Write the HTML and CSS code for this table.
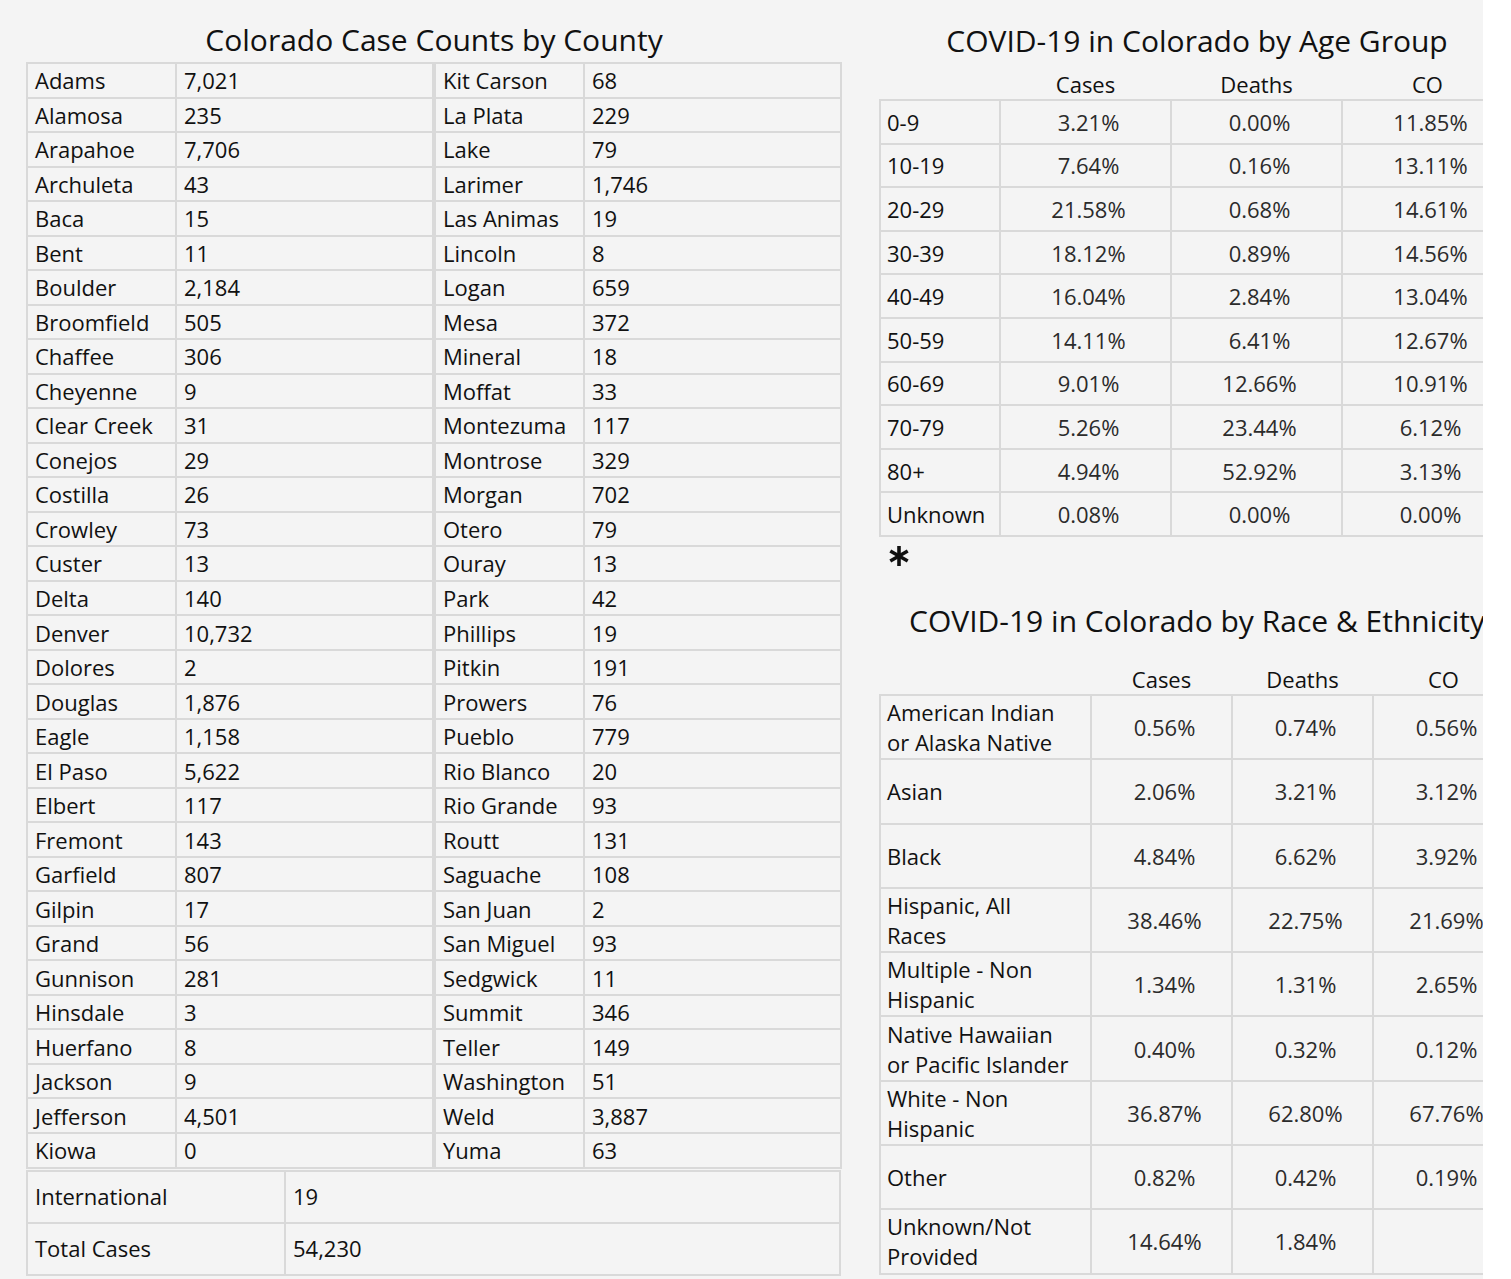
FILE: index.html
```html
<!DOCTYPE html>
<html lang="en">
<head>
<meta charset="utf-8">
<title>Colorado COVID-19 Data</title>
<link rel="stylesheet" href="styles.css">
</head>
<body>
<div class="page">
  <section class="left">
    <h2 class="title">Colorado Case Counts by County</h2>
    <div class="county-wrap">
      <table class="county">
        <colgroup><col class="c-name"><col class="c-val"></colgroup>
        <tbody>
          <tr><td>Adams</td><td>7,021</td></tr>
          <tr><td>Alamosa</td><td>235</td></tr>
          <tr><td>Arapahoe</td><td>7,706</td></tr>
          <tr><td>Archuleta</td><td>43</td></tr>
          <tr><td>Baca</td><td>15</td></tr>
          <tr><td>Bent</td><td>11</td></tr>
          <tr><td>Boulder</td><td>2,184</td></tr>
          <tr><td>Broomfield</td><td>505</td></tr>
          <tr><td>Chaffee</td><td>306</td></tr>
          <tr><td>Cheyenne</td><td>9</td></tr>
          <tr><td>Clear Creek</td><td>31</td></tr>
          <tr><td>Conejos</td><td>29</td></tr>
          <tr><td>Costilla</td><td>26</td></tr>
          <tr><td>Crowley</td><td>73</td></tr>
          <tr><td>Custer</td><td>13</td></tr>
          <tr><td>Delta</td><td>140</td></tr>
          <tr><td>Denver</td><td>10,732</td></tr>
          <tr><td>Dolores</td><td>2</td></tr>
          <tr><td>Douglas</td><td>1,876</td></tr>
          <tr><td>Eagle</td><td>1,158</td></tr>
          <tr><td>El Paso</td><td>5,622</td></tr>
          <tr><td>Elbert</td><td>117</td></tr>
          <tr><td>Fremont</td><td>143</td></tr>
          <tr><td>Garfield</td><td>807</td></tr>
          <tr><td>Gilpin</td><td>17</td></tr>
          <tr><td>Grand</td><td>56</td></tr>
          <tr><td>Gunnison</td><td>281</td></tr>
          <tr><td>Hinsdale</td><td>3</td></tr>
          <tr><td>Huerfano</td><td>8</td></tr>
          <tr><td>Jackson</td><td>9</td></tr>
          <tr><td>Jefferson</td><td>4,501</td></tr>
          <tr><td>Kiowa</td><td>0</td></tr>
        </tbody>
      </table>
      <table class="county">
        <colgroup><col class="c-name"><col class="c-val"></colgroup>
        <tbody>
          <tr><td>Kit Carson</td><td>68</td></tr>
          <tr><td>La Plata</td><td>229</td></tr>
          <tr><td>Lake</td><td>79</td></tr>
          <tr><td>Larimer</td><td>1,746</td></tr>
          <tr><td>Las Animas</td><td>19</td></tr>
          <tr><td>Lincoln</td><td>8</td></tr>
          <tr><td>Logan</td><td>659</td></tr>
          <tr><td>Mesa</td><td>372</td></tr>
          <tr><td>Mineral</td><td>18</td></tr>
          <tr><td>Moffat</td><td>33</td></tr>
          <tr><td>Montezuma</td><td>117</td></tr>
          <tr><td>Montrose</td><td>329</td></tr>
          <tr><td>Morgan</td><td>702</td></tr>
          <tr><td>Otero</td><td>79</td></tr>
          <tr><td>Ouray</td><td>13</td></tr>
          <tr><td>Park</td><td>42</td></tr>
          <tr><td>Phillips</td><td>19</td></tr>
          <tr><td>Pitkin</td><td>191</td></tr>
          <tr><td>Prowers</td><td>76</td></tr>
          <tr><td>Pueblo</td><td>779</td></tr>
          <tr><td>Rio Blanco</td><td>20</td></tr>
          <tr><td>Rio Grande</td><td>93</td></tr>
          <tr><td>Routt</td><td>131</td></tr>
          <tr><td>Saguache</td><td>108</td></tr>
          <tr><td>San Juan</td><td>2</td></tr>
          <tr><td>San Miguel</td><td>93</td></tr>
          <tr><td>Sedgwick</td><td>11</td></tr>
          <tr><td>Summit</td><td>346</td></tr>
          <tr><td>Teller</td><td>149</td></tr>
          <tr><td>Washington</td><td>51</td></tr>
          <tr><td>Weld</td><td>3,887</td></tr>
          <tr><td>Yuma</td><td>63</td></tr>
        </tbody>
      </table>
    </div>
    <table class="totals">
      <colgroup><col class="t-name"><col class="t-val"></colgroup>
      <tbody>
        <tr><td>International</td><td>19</td></tr>
        <tr><td>Total Cases</td><td>54,230</td></tr>
      </tbody>
    </table>
  </section>

  <section class="right">
    <h2 class="title">COVID-19 in Colorado by Age Group</h2>
    <table class="stats age">
      <colgroup><col class="a-name"><col class="a-val"><col class="a-val"><col class="a-val"></colgroup>
      <thead>
        <tr><th></th><th>Cases</th><th>Deaths</th><th>CO</th></tr>
      </thead>
      <tbody>
        <tr><td>0-9</td><td>3.21%</td><td>0.00%</td><td>11.85%</td></tr>
        <tr><td>10-19</td><td>7.64%</td><td>0.16%</td><td>13.11%</td></tr>
        <tr><td>20-29</td><td>21.58%</td><td>0.68%</td><td>14.61%</td></tr>
        <tr><td>30-39</td><td>18.12%</td><td>0.89%</td><td>14.56%</td></tr>
        <tr><td>40-49</td><td>16.04%</td><td>2.84%</td><td>13.04%</td></tr>
        <tr><td>50-59</td><td>14.11%</td><td>6.41%</td><td>12.67%</td></tr>
        <tr><td>60-69</td><td>9.01%</td><td>12.66%</td><td>10.91%</td></tr>
        <tr><td>70-79</td><td>5.26%</td><td>23.44%</td><td>6.12%</td></tr>
        <tr><td>80+</td><td>4.94%</td><td>52.92%</td><td>3.13%</td></tr>
        <tr><td>Unknown</td><td>0.08%</td><td>0.00%</td><td>0.00%</td></tr>
      </tbody>
    </table>
    <div class="note">
      <svg class="asterisk" width="22" height="22" viewBox="0 0 22 22" aria-label="note">
        <g stroke="#111" stroke-width="3.6" stroke-linecap="butt">
          <line x1="11" y1="1" x2="11" y2="21"/>
          <line x1="2.3" y1="6" x2="19.7" y2="16"/>
          <line x1="2.3" y1="16" x2="19.7" y2="6"/>
        </g>
      </svg>
    </div>
    <h2 class="title race-title">COVID-19 in Colorado by Race &amp; Ethnicity</h2>
    <table class="stats race">
      <colgroup><col class="r-name"><col class="r-val"><col class="r-val"><col class="r-val"></colgroup>
      <thead>
        <tr><th></th><th>Cases</th><th>Deaths</th><th>CO</th></tr>
      </thead>
      <tbody>
        <tr><td>American Indian<br>or Alaska Native</td><td>0.56%</td><td>0.74%</td><td>0.56%</td></tr>
        <tr><td>Asian</td><td>2.06%</td><td>3.21%</td><td>3.12%</td></tr>
        <tr><td>Black</td><td>4.84%</td><td>6.62%</td><td>3.92%</td></tr>
        <tr><td>Hispanic, All<br>Races</td><td>38.46%</td><td>22.75%</td><td>21.69%</td></tr>
        <tr><td>Multiple - Non<br>Hispanic</td><td>1.34%</td><td>1.31%</td><td>2.65%</td></tr>
        <tr><td>Native Hawaiian<br>or Pacific Islander</td><td>0.40%</td><td>0.32%</td><td>0.12%</td></tr>
        <tr><td>White - Non<br>Hispanic</td><td>36.87%</td><td>62.80%</td><td>67.76%</td></tr>
        <tr><td>Other</td><td>0.82%</td><td>0.42%</td><td>0.19%</td></tr>
        <tr><td>Unknown/Not<br>Provided</td><td>14.64%</td><td>1.84%</td><td></td></tr>
      </tbody>
    </table>
  </section>
</div>
</body>
</html>
```

FILE: styles.css
```css
html, body {
  margin: 0;
  padding: 0;
  background: #ffffff;
}

body {
  font-family: "Open Sans", "DejaVu Sans", sans-serif;
  color: #111;
}

.page {
  display: flex;
  align-items: flex-start;
  width: 1483px;
  height: 1279px;
  overflow: hidden;
  background: #f4f4f4;
}

.title {
  margin: 0;
  font-weight: 400;
  font-size: 30px;
  line-height: 36px;
  text-align: center;
  color: #111;
  white-space: nowrap;
}

table {
  border-collapse: collapse;
  table-layout: fixed;
}

/* ---------- Left: counties ---------- */
.left {
  flex: 0 0 815px;
  margin-left: 26px;
  padding-top: 22px;
}

.left .title {
  margin-bottom: 4px;
}

.county-wrap {
  display: flex;
}

.county {
  width: 408px;
  border: 2px solid #d9d9d9;
}

.county .c-name { width: 149px; }

.county td,
.totals td {
  border: 2px solid #d9d9d9;
  padding: 0 0 0 7px;
  font-size: 22px;
  line-height: 26px;
  white-space: nowrap;
  overflow: hidden;
}

.county tr {
  height: 34.53px;
}

.totals {
  width: 815px;
  margin-top: 1px;
  border: 2px solid #d9d9d9;
}

.totals .t-name { width: 258px; }

.totals tr {
  height: 52px;
}

.totals td {
  padding-bottom: 1px;
}

/* ---------- Right: stats ---------- */
.right {
  flex: 0 0 633px;
  margin-left: 37px;
  padding-top: 23px;
}

.right .title {
  margin-bottom: 10px;
}

.stats {
  width: 633px;
}

.stats th {
  font-weight: 400;
  font-size: 22px;
  line-height: 26px;
  height: 30px;
  padding: 0;
  text-align: center;
  vertical-align: middle;
  color: #111;
}

.stats td {
  border: 2px solid #d9d9d9;
  font-size: 22px;
  line-height: 30px;
  padding: 0 0 0 6px;
  text-align: center;
  color: #2b2b2b;
  white-space: nowrap;
  vertical-align: middle;
}

.stats td:first-child {
  text-align: left;
  color: #111;
}

.age .a-name { width: 120px; }
.age .a-val { width: 171px; }
.age tbody tr { height: 43.6px; }

.race .r-name { width: 211px; }
.race .r-val { width: 141px; }
.race tbody tr { height: 64.3px; }

.note {
  height: 66px;
  padding: 8px 0 0 9px;
  box-sizing: border-box;
}

.asterisk {
  display: block;
}

.right .race-title {
  margin-bottom: 25px;
}
```
